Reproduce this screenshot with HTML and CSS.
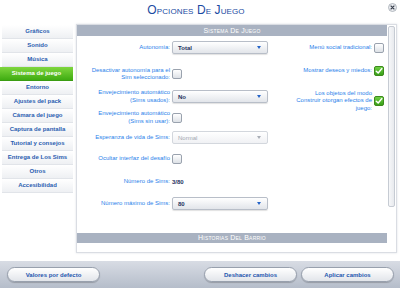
FILE: index.html
```html
<!DOCTYPE html>
<html lang="es">
<head>
    <meta charset="UTF-8">
    <meta name="viewport" content="width=device-width, initial-scale=1.0">
    <title>Opciones de juego</title>
    <link rel="stylesheet" href="styles.css">
</head>
<body>
    <div class="window">
        <header class="top">
            <span></span>
            <h1 class="title">Opciones de juego</h1>
            <button class="close" type="button" aria-label="Cerrar">
                <svg width="9" height="9" viewBox="0 0 9 9">
                    <circle cx="4.5" cy="4.5" r="4" fill="#e9ebef" stroke="#a3a9b3" stroke-width="0.8"/>
                    <path d="M3 3 L6 6 M6 3 L3 6" stroke="#3c4350" stroke-width="1.1" stroke-linecap="round"/>
                </svg>
            </button>
        </header>

        <div class="main">
            <nav class="tabs">
                <a class="tab">Gráficos</a>
                <a class="tab">Sonido</a>
                <a class="tab">Música</a>
                <a class="tab active">Sistema de juego</a>
                <a class="tab">Entorno</a>
                <a class="tab">Ajustes del pack</a>
                <a class="tab">Cámara del juego</a>
                <a class="tab">Captura de pantalla</a>
                <a class="tab">Tutorial y consejos</a>
                <a class="tab">Entrega de Los Sims</a>
                <a class="tab">Otros</a>
                <a class="tab">Accesibilidad</a>
            </nav>

            <section class="panel">
                <div class="scroll">
                    <h2 class="section-head">Sistema de juego</h2>
                    <div class="section-body">
                        <div class="form-left">
                            <label class="label">Autonomía:</label>
                            <div class="select"><span>Total</span><i class="arrow"></i></div>

                            <label class="label">Desactivar autonomía para el Sim seleccionado:</label>
                            <div><span class="check"></span></div>

                            <label class="label">Envejecimiento automático (Sims usados):</label>
                            <div class="select"><span>No</span><i class="arrow"></i></div>

                            <label class="label">Envejecimiento automático (Sims sin usar):</label>
                            <div><span class="check"></span></div>

                            <label class="label">Esperanza de vida de Sims:</label>
                            <div class="select disabled"><span>Normal</span><i class="arrow"></i></div>

                            <label class="label">Ocultar interfaz del desafío</label>
                            <div><span class="check"></span></div>

                            <label class="label">Número de Sims:</label>
                            <div class="value">3/80</div>

                            <label class="label">Número máximo de Sims:</label>
                            <div class="select"><span>80</span><i class="arrow"></i></div>
                        </div>

                        <div class="form-right">
                            <label class="label">Menú social tradicional:</label>
                            <span class="check"></span>

                            <label class="label">Mostrar deseos y miedos:</label>
                            <span class="check checked"></span>

                            <label class="label">Los objetos del modo Construir otorgan efectos de juego:</label>
                            <span class="check checked"></span>
                        </div>
                    </div>
                    <h2 class="section-head">Historias del barrio</h2>
                </div>
                <div class="scrollbar"><div class="thumb"></div></div>
            </section>
        </div>

        <footer class="actions">
            <button class="pill" type="button">Valores por defecto</button>
            <div class="spacer"></div>
            <button class="pill" type="button">Deshacer cambios</button>
            <button class="pill" type="button">Aplicar cambios</button>
        </footer>
    </div>
</body>
</html>
```

FILE: styles.css
```css
body {
    margin: 0;
    font-family: "Liberation Sans", Arial, sans-serif;
    background-color: #ffffff;
}
.window {
    width: 400px;
    height: 288px;
    display: flex;
    flex-direction: column;
    overflow: hidden;
}

/* title bar */
.top {
    height: 24px;
    display: grid;
    grid-template-columns: 1fr auto 1fr;
    align-items: start;
}
.title {
    margin: 3px 0 0 -8px;
    font-size: 12px;
    font-weight: normal;
    font-variant: small-caps;
    text-transform: capitalize;
    letter-spacing: 0.1px;
    color: #1a4aa2;
    line-height: 14px;
}
.close {
    justify-self: end;
    margin: 3px 3px 0 0;
    padding: 0;
    border: none;
    background: none;
    width: 9px;
    height: 9px;
    line-height: 0;
}

/* main area */
.main {
    height: 229px;
    display: flex;
}
.tabs {
    width: 73px;
    padding-top: 1px;
    display: flex;
    flex-direction: column;
}
.tab {
    height: 13px;
    margin-left: 2px;
    border-bottom: 1px solid #e1e4e9;
    background: linear-gradient(#ffffff, #eef0f3);
    color: #2b5db0;
    font-size: 6px;
    font-weight: bold;
    line-height: 13px;
    text-align: center;
}
.tab.active {
    margin-left: 0;
    background: linear-gradient(#7fd63e, #3fac12);
    border-bottom-color: #3a9c12;
    color: #ffffff;
}

.panel {
    width: 319px;
    margin-left: 3px;
    border: 1px solid #dadde3;
    box-shadow: 0 0 2px rgba(120, 130, 150, 0.25);
    display: flex;
    background-color: #ffffff;
}
.scroll {
    width: 310px;
}
.section-head {
    margin: 0;
    height: 10px;
    background-color: #a9b2c1;
    color: #ffffff;
    font-size: 7px;
    font-weight: normal;
    font-variant: small-caps;
    text-transform: capitalize;
    letter-spacing: 0.2px;
    line-height: 10px;
    text-align: center;
}
.section-head:first-child {
    height: 11px;
    line-height: 11px;
}
.section-body {
    height: 197px;
    display: flex;
}

.form-left {
    width: 191px;
    display: grid;
    grid-template-columns: 93px 96px;
    grid-template-rows: 23px 30px 15px 27px 13px 30px 16px 27px;
    column-gap: 2px;
    align-items: center;
}
.form-right {
    width: 119px;
    display: grid;
    grid-template-columns: 1fr 10px;
    grid-template-rows: 24px 22px 38px;
    column-gap: 2px;
    padding-right: 3px;
    align-items: center;
    align-content: start;
}
.label {
    color: #2a82ea;
    font-size: 6px;
    line-height: 7.5px;
    text-align: right;
}
.form-left .label {
    padding-left: 8px;
}
.form-right .label {
    justify-self: end;
    max-width: 78px;
}

.select {
    height: 11px;
    border: 1px solid #b8bec8;
    border-radius: 2px;
    background: linear-gradient(#ffffff, #e2e5ea);
    box-shadow: 0 1px 1px rgba(0, 0, 0, 0.12);
    display: flex;
    align-items: center;
    justify-content: space-between;
    padding: 0 6px 0 5px;
    color: #1e325e;
    font-size: 6px;
    font-weight: bold;
}
.arrow {
    width: 0;
    height: 0;
    border-left: 2.5px solid transparent;
    border-right: 2.5px solid transparent;
    border-top: 3px solid #2564c8;
}
.select.disabled {
    background: linear-gradient(#ffffff, #f0f1f4);
    border-color: #d3d7dd;
    box-shadow: none;
    color: #a3a8b0;
    font-weight: normal;
}
.select.disabled .arrow {
    border-top-color: #a9aeb6;
}

.check {
    display: block;
    width: 8px;
    height: 8px;
    border: 1px solid #9aa2ae;
    border-radius: 2px;
    background: linear-gradient(#ffffff, #dde1e6);
}
.check.checked {
    border-color: #3d8a1e;
    background-color: #4cb52a;
    background-image: url("data:image/svg+xml,%3Csvg xmlns='http://www.w3.org/2000/svg' viewBox='0 0 8 8'%3E%3Cpath d='M1.3 4.2 L3.2 6 L6.8 1.6' fill='none' stroke='white' stroke-width='1.5' stroke-linecap='round' stroke-linejoin='round'/%3E%3C/svg%3E"), linear-gradient(#6fd043, #38a018);
}
.value {
    color: #1e325e;
    font-size: 6px;
    font-weight: bold;
}

.scrollbar {
    width: 7px;
    margin-left: 1px;
    padding-top: 1px;
}
.thumb {
    height: 179px;
    border: 1px solid #c6cbd3;
    border-radius: 2px;
    background: linear-gradient(90deg, #f6f7f9, #e8eaee);
}

/* bottom bar */
.actions {
    height: 27px;
    margin-top: 8px;
    box-sizing: border-box;
    padding: 6px 6px 0 7px;
    background: linear-gradient(#d8dce4, #b5bdca);
    display: flex;
    align-items: flex-start;
    gap: 4px;
}
.spacer {
    flex: 1;
}
.pill {
    width: 93px;
    height: 15px;
    padding: 0;
    border: 1px solid #98a0ad;
    border-radius: 8px;
    background: linear-gradient(#ffffff, #e2e5ea);
    box-shadow: 0 1px 1px rgba(0, 0, 0, 0.2);
    color: #2455ae;
    font-family: "Liberation Sans", Arial, sans-serif;
    font-size: 6px;
    font-weight: bold;
}
```
